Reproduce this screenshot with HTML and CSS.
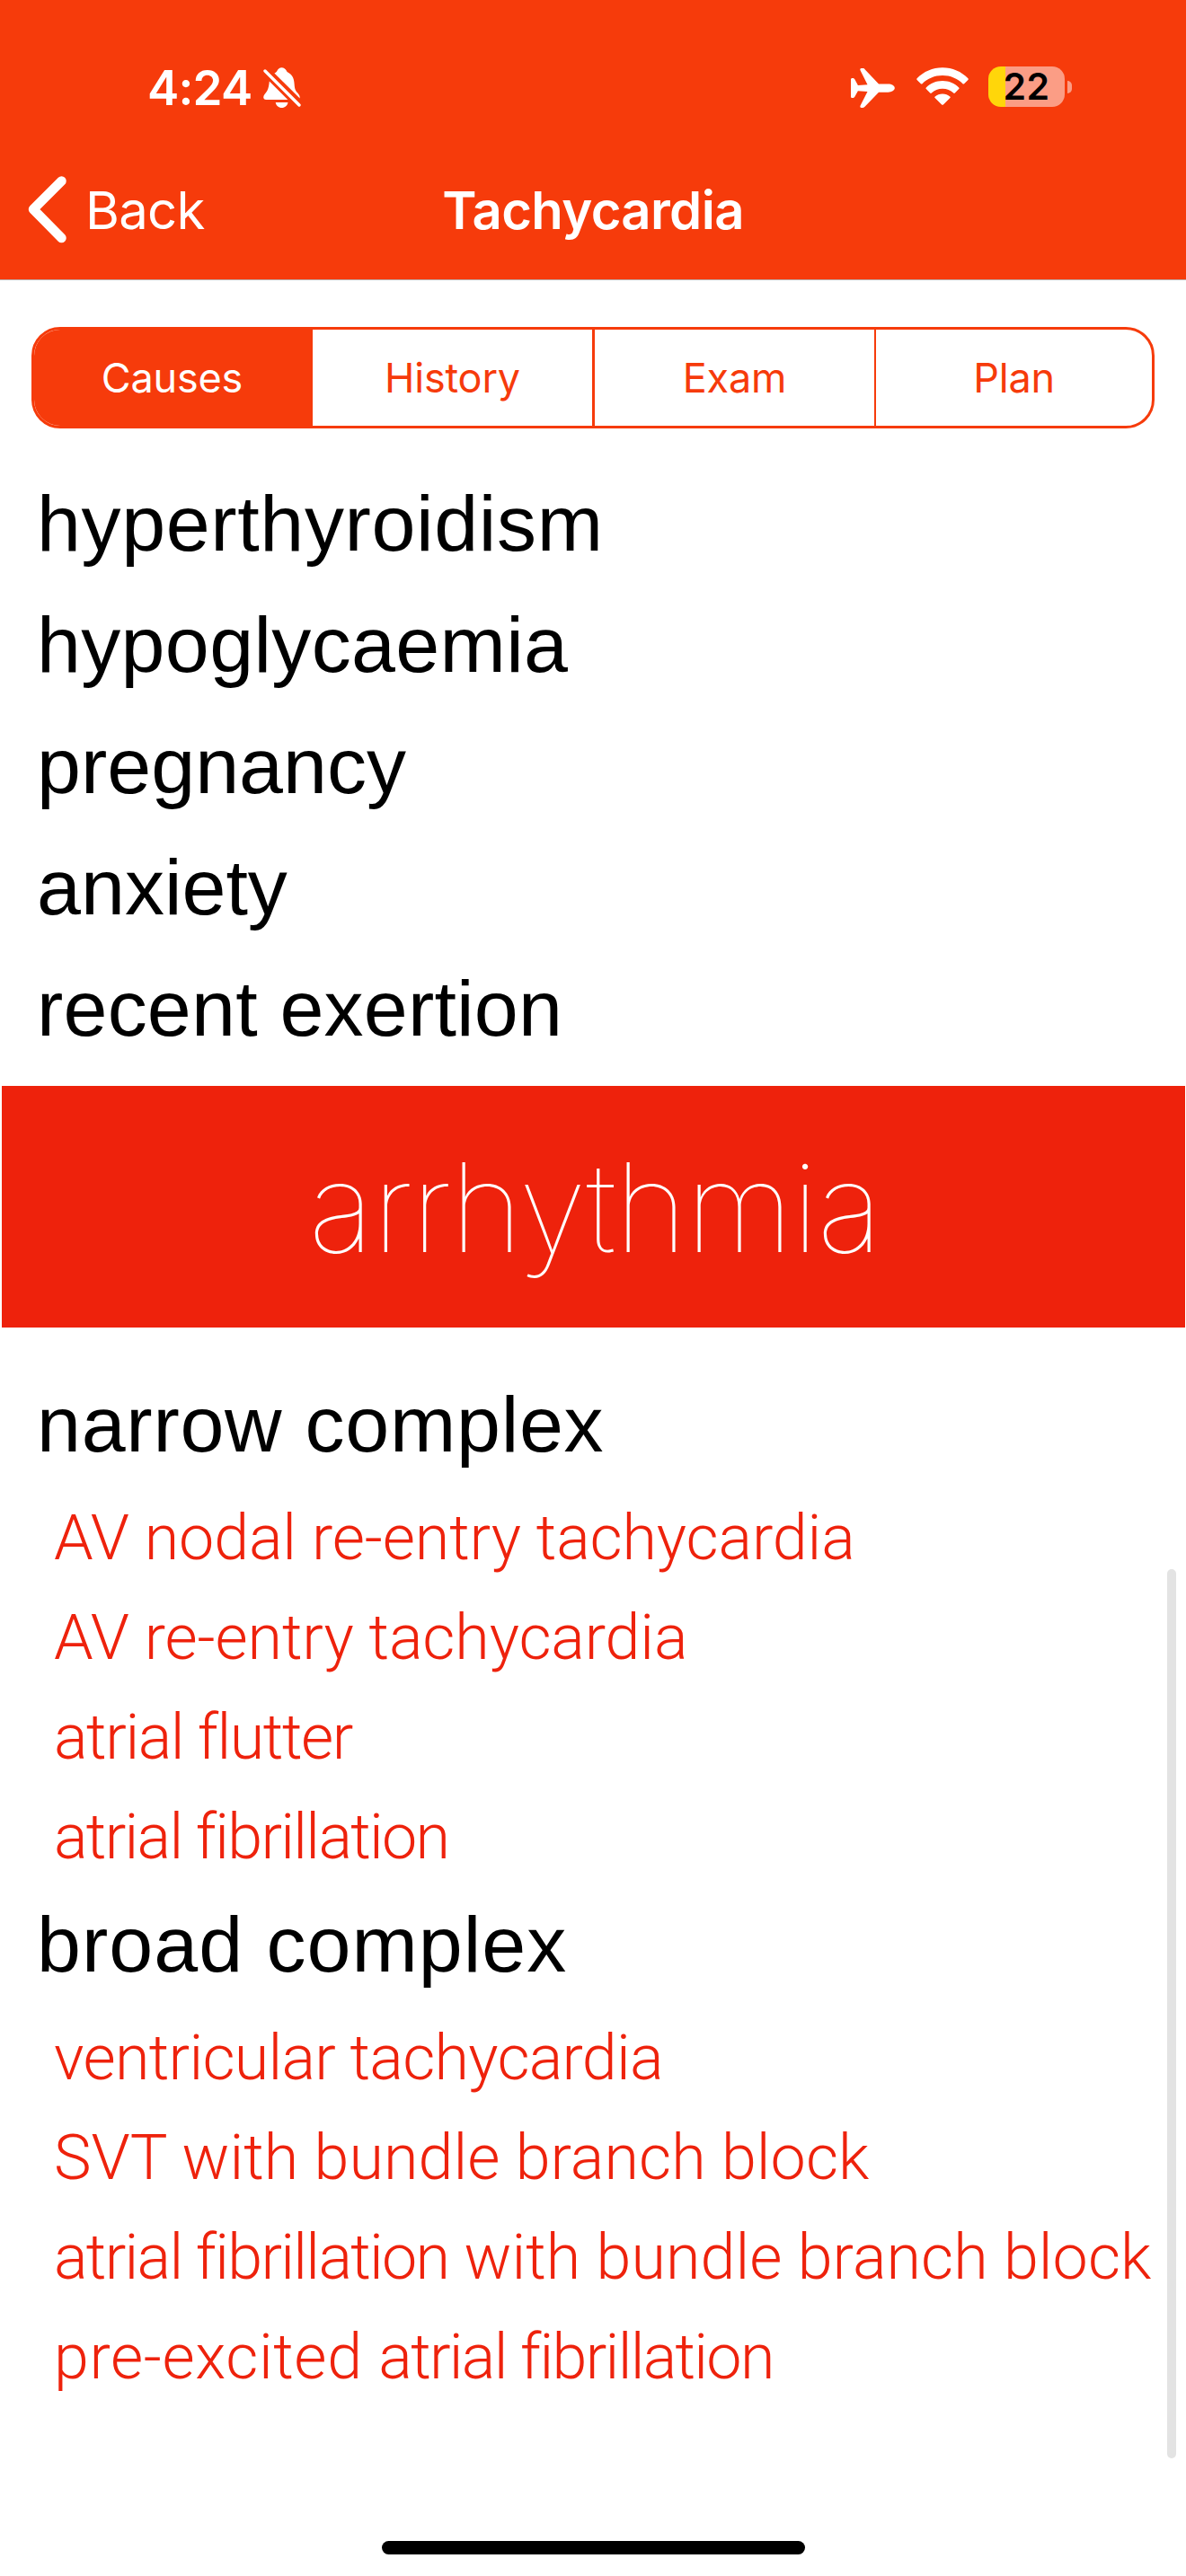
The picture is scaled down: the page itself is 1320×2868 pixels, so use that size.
FILE: index.html
```
<!DOCTYPE html>
<html lang="en">
<head>
<meta charset="utf-8">
<title>Tachycardia</title>
<link rel="stylesheet" href="styles.css">
</head>
<body>
<div class="screen">
  <header class="header">
    <div class="status">
      <div class="status-left">
        <span class="time">4:24</span>
        <svg class="bell" viewBox="0 0 42 46" width="42" height="46">
          <path fill="#fff" d="M6.8 15.5 27.3 36H3.2C1.2 36 .2 34.9 .2 33.3c0-2.500 2.600-4.300 4.200-7.300 1.500-2.800 2-6.500 2.400-10.500z"/>
          <path fill="#fff" d="M12.400 6.600C14 5.800 15 5 15.600 3.600 16.600 1.500 18.200.2 20.500.2s4.200 1.300 5.200 3.400c.6 1.400 1.600 2 3.200 3 4 2.700 5.400 6.600 5.700 11.800.4 6.600 1.600 7.600 3.700 10.200 1.700 2 2.600 3.300 2.400 5.900z"/>
          <path fill="#fff" d="M13.700 39h13.800c-.6 3.600-3.300 6-6.900 6s-6.300-2.400-6.900-6z"/>
          <path stroke="#fff" stroke-width="3.400" stroke-linecap="round" d="M2 4 40 42"/>
        </svg>
      </div>
      <div class="status-right">
        <svg class="plane" viewBox="0 0 49 44" width="49" height="44">
          <path fill="#fff" d="M0 12.500C0 11.500.7 11 1.700 11c1.300 0 2 .4 2.600 1.300L7.900 19l10.600-.8L10.600 2.400C10 1.100 10.400 0 11.800 0h1.500c1 0 1.800.5 2.500 1.400L31 17.600h10.500c4 0 7.300 1.900 7.300 4.400s-3.300 4.700-7.300 4.700H31L15.800 42.600c-.7.9-1.500 1.400-2.500 1.400h-1.500c-1.400 0-1.800-1.100-1.200-2.400l7.900-15.500L7.900 25.300l-3.600 6.500c-.6.9-1.300 1.300-2.600 1.300-1 0-1.700-.5-1.700-1.500z"/>
        </svg>
        <svg class="wifi" viewBox="0 0 58 42" width="58" height="42">
          <g fill="#fff">
            <path d="M.6 12.300C8 4.700 18 .3 29 .3s21 4.400 28.400 12c.5.500.5 1.200 0 1.700l-4.300 4.200c-.5.500-1.100.5-1.600 0C45.600 12.300 37.700 9 29 9S12.400 12.300 6.500 18.200c-.5.500-1.100.5-1.600 0L.6 14c-.5-.5-.5-1.200 0-1.700z"/>
            <path d="M10.800 22.400C15.500 17.700 21.900 15 29 15s13.500 2.700 18.200 7.400c.5.500.5 1.200 0 1.700L42.800 28.500c-.5.500-1.100.5-1.600 0C38 25.400 33.700 23.700 29 23.700s-9 1.700-12.200 4.800c-.5.500-1.100.5-1.600 0L10.800 24.100c-.5-.5-.5-1.200 0-1.700z"/>
            <path d="M20.700 32.400c2.300-1.900 5.100-2.900 8.300-2.900s6 1 8.300 2.900c.6.500.6 1.200.1 1.700l-7.500 7.300c-.5.500-1.300.5-1.800 0l-7.500-7.300c-.5-.5-.5-1.200.1-1.700z"/>
          </g>
        </svg>
        <div class="battery">
          <div class="battery-body">22</div>
          <div class="battery-cap"></div>
        </div>
      </div>
    </div>
    <nav class="nav">
      <a class="back">
        <svg viewBox="0 0 43 75" width="43" height="75"><path fill="none" stroke="#fff" stroke-width="10.500" stroke-linecap="round" stroke-linejoin="round" d="M37.500 5.500 6 37 37.500 69"/></svg>
        <span>Back</span>
      </a>
      <h1 class="title">Tachycardia</h1>
    </nav>
  </header>

  <main class="content">
    <div class="segments">
      <div class="segment active">Causes</div>
      <div class="segment">History</div>
      <div class="segment">Exam</div>
      <div class="segment">Plan</div>
    </div>

    <ul class="causes">
      <li class="ls-wide">hyperthyroidism</li>
      <li class="ls-mid">hypoglycaemia</li>
      <li>pregnancy</li>
      <li>anxiety</li>
      <li class="ls-slight">recent exertion</li>
    </ul>

    <h2 class="banner">arrhythmia</h2>

    <section class="group">
      <h3>narrow complex</h3>
      <ul>
        <li class="ls-a">AV nodal re-entry tachycardia</li>
        <li class="ls-a">AV re-entry tachycardia</li>
        <li class="ls-c">atrial flutter</li>
        <li class="ls-d">atrial fibrillation</li>
      </ul>
    </section>
    <section class="group">
      <h3 class="ls-head">broad complex</h3>
      <ul>
        <li class="ls-b">ventricular tachycardia</li>
        <li class="ls-e">SVT with bundle branch block</li>
        <li class="ls-e"><span class="ls-d">atrial fibrillation</span> with bundle branch block</li>
        <li class="ls-f">pre-excited <span class="ls-d">atrial fibrillation</span></li>
      </ul>
    </section>
  </main>

  <div class="scrollbar"></div>
  <div class="home-indicator"></div>
</div>
</body>
</html>
```
FILE: styles.css
```
* { box-sizing: border-box; }

body {
  margin: 0;
  background: #fff;
  font-family: Inter, "Liberation Sans", sans-serif;
}

ul, h1, h2, h3 { margin: 0; padding: 0; list-style: none; }

.screen {
  position: relative;
  display: flex;
  flex-direction: column;
  width: 1320px;
  height: 2868px;
  overflow: hidden;
}

/* Header */
.header {
  height: 312px;
  background: #f63b0b;
  border-bottom: 1px solid #b9aeab;
  color: #fff;
}

.status {
  display: flex;
  justify-content: space-between;
  align-items: center;
  height: 195px;
  padding: 0 127px 0 164px;
}

.status-left, .status-right, .battery, .back { display: flex; align-items: center; }
.status-left { gap: 12px; }
.time { font-size: 53px; font-weight: 600; letter-spacing: -0.8px; }
.bell { margin-top: 1px; }
.plane { margin-right: 24px; }
.wifi { margin-right: 22px; margin-top: -3px; }
.battery { gap: 3px; }

.battery-body {
  width: 85px;
  height: 45px;
  margin-top: -2px;
  border-radius: 14px;
  background: linear-gradient(90deg, #ffd60a 19px, #fb9d85 19px);
  color: #000;
  font-size: 41px;
  font-weight: 600;
  line-height: 45px;
  letter-spacing: 0.4px;
  text-align: center;
}

.battery-cap {
  width: 5px;
  height: 14px;
  margin-top: -2px;
  border-radius: 0 5px 5px 0;
  background: #fb9d85;
}

.nav {
  display: grid;
  grid-template-columns: 1fr auto 1fr;
  align-items: center;
  height: 77px;
  padding: 0 31px;
  font-size: 58px;
}

.back { gap: 21px; letter-spacing: -0.7px; }
.title { font-size: 58px; font-weight: 600; letter-spacing: -0.65px; }

/* Segmented control */
.segments {
  display: grid;
  grid-template-columns: 310px 314px 313px 1fr;
  width: 1250px;
  height: 113px;
  margin: 52px 35px 0;
  border: 3px solid #f63b0b;
  border-radius: 32px;
  overflow: hidden;
}

.segment {
  display: flex;
  align-items: center;
  justify-content: center;
  border-right: 3px solid #f63b0b;
  color: #f63b0b;
  font-size: 45px;
  letter-spacing: -0.2px;
}

.segment:nth-child(3) { border-right-width: 2px; }
.segment:last-child { border-right: 0; }
.segment.active { background: #f63b0b; color: #fff; }

/* Lists */
.causes, .group h3 {
  padding-left: 41px;
  font: 400 88px "Liberation Sans", Arial, sans-serif;
}

.causes { margin-top: 37.6px; }
.causes li { line-height: 135.2px; }
.causes .ls-wide { letter-spacing: 0.63px; }
.causes .ls-mid { letter-spacing: 0.33px; }
.causes .ls-slight { letter-spacing: 0.2px; }

.banner {
  height: 269px;
  margin: 18px 1px 0 2px;
  padding-left: 3px;
  background: #ee220c;
  color: #fff;
  font-size: 138px;
  font-weight: 100;
  line-height: 269px;
  letter-spacing: -1.5px;
  text-align: center;
}

.banner + .group { margin-top: 44.4px; }

.group h3 { line-height: 128px; letter-spacing: 0.73px; }
.group .ls-head { letter-spacing: 1px; }

.group ul {
  margin-top: 7.4px;
  padding-left: 60px;
  color: #ee220c;
  font-family: Roboto, "Liberation Sans", sans-serif;
  font-size: 70px;
  font-weight: 300;
}

.group li { line-height: 110.9px; white-space: nowrap; }
.ls-a { letter-spacing: -0.12px; }
.ls-b { letter-spacing: -0.72px; }
.ls-c { letter-spacing: -1.42px; }
.ls-d { letter-spacing: -1.7px; }
.ls-e { letter-spacing: 0.08px; }
.ls-f { letter-spacing: 0.6px; }

/* Overlays */
.scrollbar {
  position: absolute;
  top: 1747px;
  left: 1299px;
  width: 10px;
  height: 990px;
  border-radius: 5px;
  background: #e3e3e3;
}

.home-indicator {
  position: absolute;
  bottom: 24px;
  left: 425px;
  width: 471px;
  height: 15px;
  border-radius: 8px;
  background: #000;
}
```
